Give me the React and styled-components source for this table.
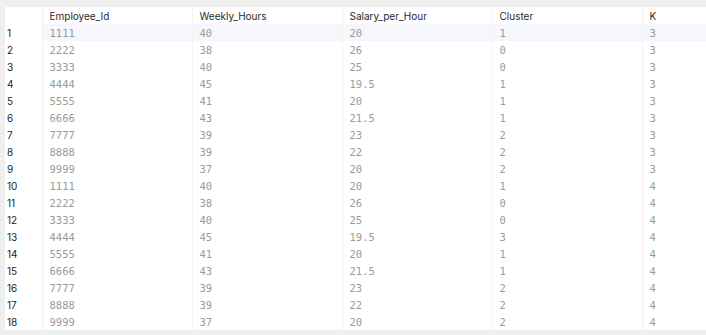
import styled, { createGlobalStyle } from "styled-components";

const GlobalStyle = createGlobalStyle`
  html, body {
    margin: 0;
    padding: 0;
    background: #efefef;
  }
  body {
    font-family: Inter, "Noto Sans", sans-serif;
  }
`;

const Frame = styled.div`
  padding: 7px 0 5px 5px;
`;

const Table = styled.table`
  width: 701px;
  background: #fff;
  border-collapse: collapse;
  table-layout: fixed;

  col.index {
    width: 37px;
  }
  col.data {
    width: 150px;
  }
`;

const HeadCell = styled.th`
  height: 17px;
  padding: 0 0 0 7px;
  text-align: left;
  font-weight: 400;
  font-size: 10px;
  color: #2a2a2a;
  white-space: nowrap;
  border-left: ${({ $first }) => ($first ? "none" : "1px solid #f3f3f3")};
`;

const IndexCell = styled.td`
  height: 17px;
  padding: 0 0 0 2px;
  font-size: 10px;
  color: #1e1e1e;
  background: #fff;
`;

const Cell = styled.td`
  height: 17px;
  padding: 0 0 0 7px;
  font-family: "DejaVu Sans Mono", "Liberation Mono", monospace;
  font-size: 10.5px;
  color: #9a9a9a;
  background: ${({ $active }) => ($active ? "#f6f6fd" : "#fff")};
  border-left: 1px solid #f3f3f3;
  white-space: nowrap;
`;

const columns = ["Employee_Id", "Weekly_Hours", "Salary_per_Hour", "Cluster", "K"];

const base = [
  ["1111", "40", "20", "1"],
  ["2222", "38", "26", "0"],
  ["3333", "40", "25", "0"],
  ["4444", "45", "19.5", "1"],
  ["5555", "41", "20", "1"],
  ["6666", "43", "21.5", "1"],
  ["7777", "39", "23", "2"],
  ["8888", "39", "22", "2"],
  ["9999", "37", "20", "2"],
];

const k4Clusters = ["1", "0", "0", "3", "1", "1", "2", "2", "2"];

const rows = [
  ...base.map((r) => [...r, "3"]),
  ...base.map((r, i) => [r[0], r[1], r[2], k4Clusters[i], "4"]),
];

export default function App() {
  return (
    <>
      <GlobalStyle />
      <Frame>
        <Table>
          <colgroup>
            <col className="index" />
            <col className="data" />
            <col className="data" />
            <col className="data" />
            <col className="data" />
            <col />
          </colgroup>
          <thead>
            <tr>
              <HeadCell $first />
              {columns.map((c) => (
                <HeadCell key={c}>{c}</HeadCell>
              ))}
            </tr>
          </thead>
          <tbody>
            {rows.map((r, i) => (
              <tr key={i}>
                <IndexCell>{i + 1}</IndexCell>
                {r.map((v, j) => (
                  <Cell key={j} $active={i === 0}>
                    {v}
                  </Cell>
                ))}
              </tr>
            ))}
          </tbody>
        </Table>
      </Frame>
    </>
  );
}
